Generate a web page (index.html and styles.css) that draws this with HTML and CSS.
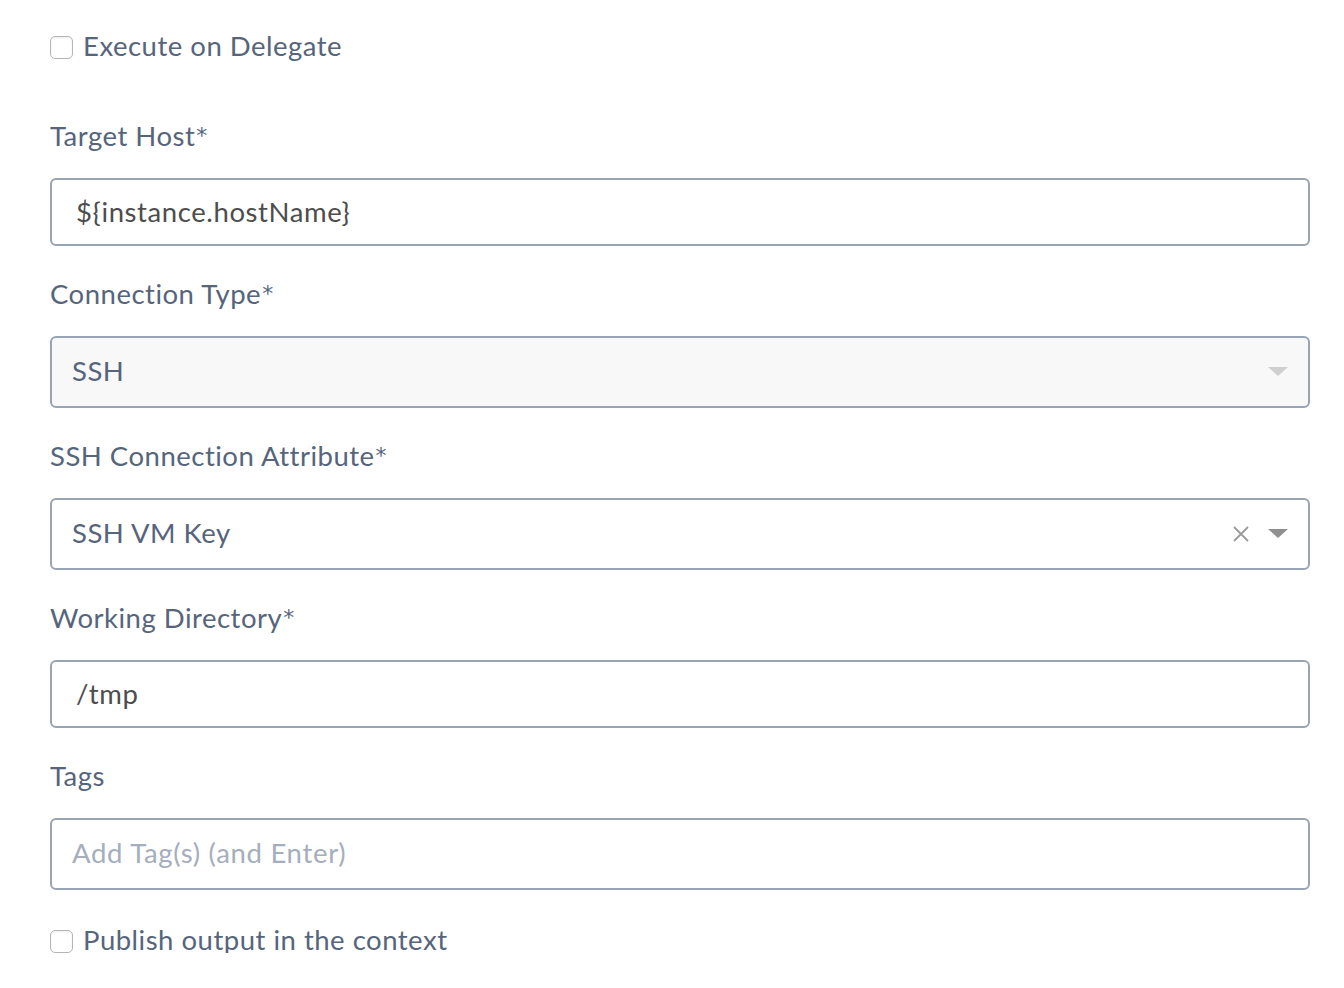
FILE: index.html
```html
<!DOCTYPE html>
<html>
<head>
<meta charset="utf-8">
<link rel="stylesheet" href="styles.css">
</head>
<body>
<div class="form">
  <label class="check first">
    <span class="box"></span>
    <span class="check-text">Execute on Delegate</span>
  </label>

  <div class="field top-field">
    <div class="label">Target Host<span class="req">*</span></div>
    <div class="input"><span class="value">${instance.hostName}</span></div>
  </div>

  <div class="field">
    <div class="label">Connection Type<span class="req">*</span></div>
    <div class="select disabled">
      <span class="sel-value">SSH</span>
      <span class="icons">
        <svg class="caret light" width="20" height="10" viewBox="0 0 20 10"><path d="M0 0 L20 0 L10 9 Z"/></svg>
      </span>
    </div>
  </div>

  <div class="field">
    <div class="label">SSH Connection Attribute<span class="req">*</span></div>
    <div class="select">
      <span class="sel-value">SSH VM Key</span>
      <span class="icons">
        <svg class="clear" width="18" height="18" viewBox="0 0 18 18"><path d="M2 2 L16 16 M16 2 L2 16" stroke="#9a9a9a" stroke-width="1.8" fill="none"/></svg>
        <svg class="caret dark" width="20" height="10" viewBox="0 0 20 10"><path d="M0 0 L20 0 L10 9 Z"/></svg>
      </span>
    </div>
  </div>

  <div class="field">
    <div class="label">Working Directory<span class="req">*</span></div>
    <div class="input"><span class="value">/tmp</span></div>
  </div>

  <div class="field">
    <div class="label">Tags</div>
    <div class="select tags">
      <span class="placeholder">Add Tag(s) (and Enter)</span>
    </div>
  </div>

  <label class="check last">
    <span class="box"></span>
    <span class="check-text">Publish output in the context</span>
  </label>
</div>
</body>
</html>
```

FILE: styles.css
```css
html, body {
  margin: 0;
  padding: 0;
  background: #ffffff;
}

body {
  font-family: "Lato", "Noto Sans", sans-serif;
  color: #56657b;
}

.form {
  width: 1260px;
  padding: 0 34px 0 50px;
}

.check {
  display: flex;
  align-items: center;
  height: 24px;
  gap: 10px;
}

.check.first {
  margin-top: 35px;
}

.check.last {
  margin-top: 39px;
}

.box {
  width: 21px;
  height: 21px;
  border: 1.5px solid #b5b5b5;
  border-radius: 5px;
  background: #ffffff;
  box-shadow: inset 0 1px 2px rgba(0, 0, 0, 0.08);
  flex: none;
}

.check-text {
  font-size: 27.5px;
  letter-spacing: 0.5px;
  line-height: 32px;
  color: #56657b;
  padding-bottom: 2px;
}

.field {
  margin-top: 32px;
}

.field.top-field {
  margin-top: 61px;
}

.label {
  font-size: 27.5px;
  letter-spacing: 0.5px;
  line-height: 32px;
  height: 32px;
  color: #56657b;
  margin-bottom: 26px;
}

.req {
  font-family: "DejaVu Sans", sans-serif;
  font-size: 22px;
  position: relative;
  top: -3px;
  letter-spacing: 0;
  margin-left: 1px;
}

.input,
.select {
  box-sizing: border-box;
  border: 2px solid #98a4b5;
  border-radius: 6px;
  background: #ffffff;
  display: flex;
  align-items: center;
}

.input {
  height: 68px;
  padding-left: 24px;
}

.value {
  font-size: 27.5px;
  letter-spacing: 0.6px;
  color: #4d4d4d;
  padding-bottom: 2px;
}

.select {
  height: 72px;
  padding: 0 20px 0 20px;
  justify-content: space-between;
}

.select.disabled {
  background: #f8f8f8;
}

.sel-value {
  font-size: 27.5px;
  letter-spacing: 0.5px;
  color: #56657b;
  padding-bottom: 4px;
}

.placeholder {
  font-size: 27.5px;
  letter-spacing: 0.7px;
  color: #a4aebd;
  padding-bottom: 4px;
}

.icons {
  display: flex;
  align-items: center;
  gap: 18px;
}

.caret.light path {
  fill: #cfcfcf;
}

.caret.dark path {
  fill: #8f8f8f;
}
```
